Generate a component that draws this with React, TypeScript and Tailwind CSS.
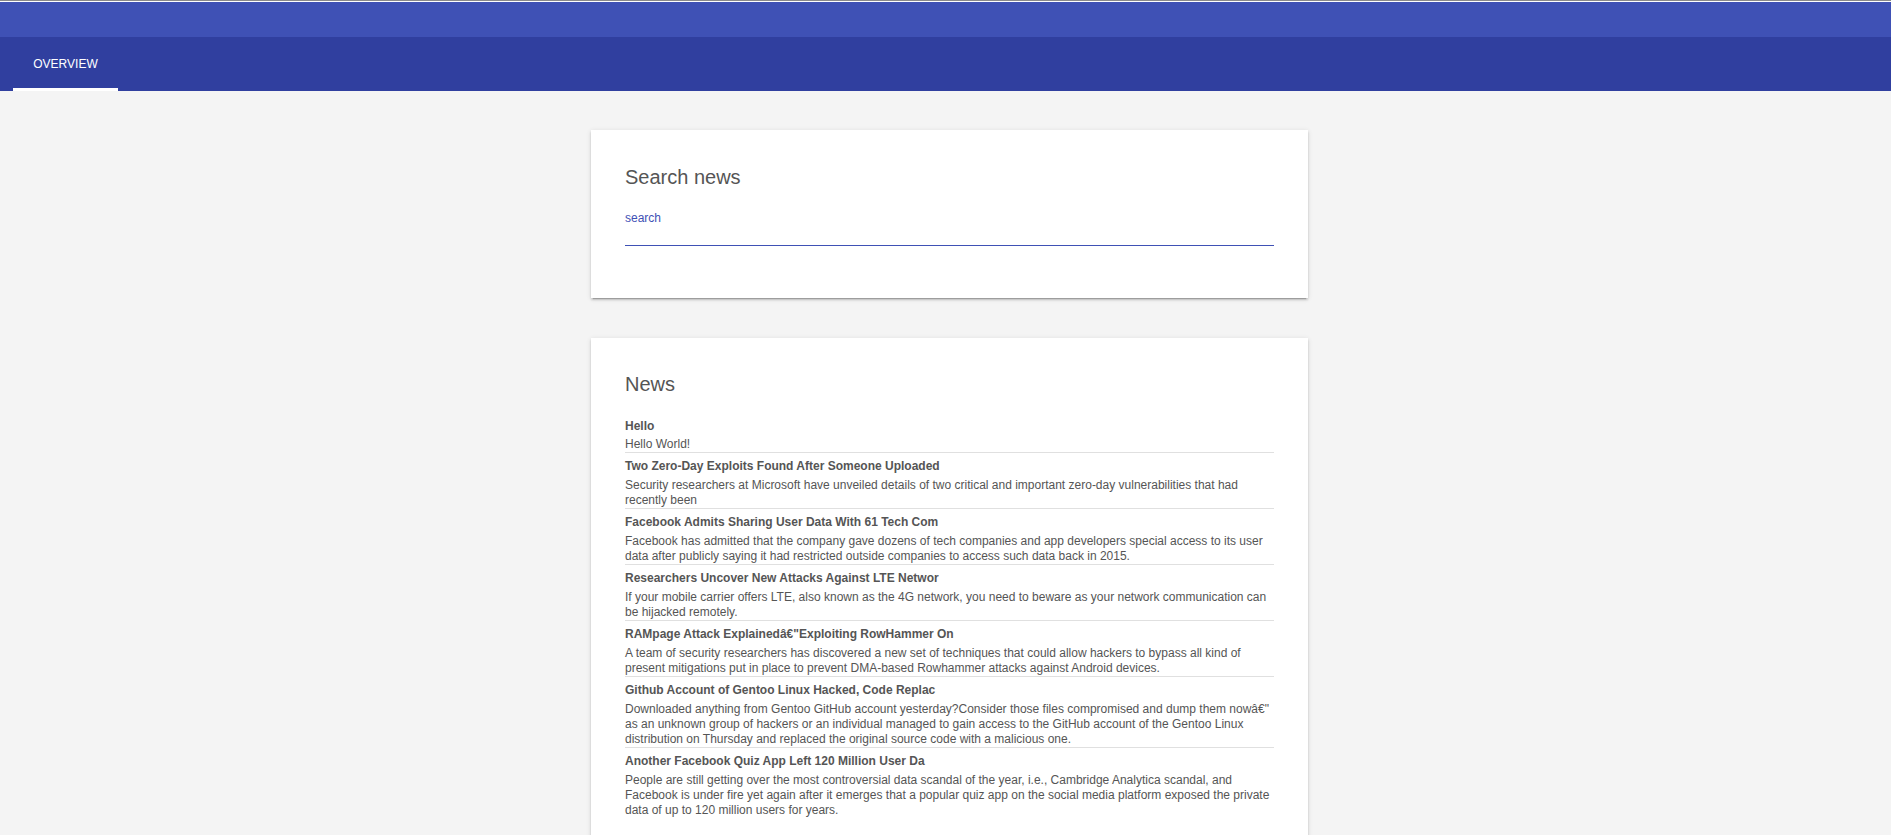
import React from 'react';

const news = [
  { title: 'Hello', body: 'Hello World!' },
  {
    title: 'Two Zero-Day Exploits Found After Someone Uploaded',
    body: 'Security researchers at Microsoft have unveiled details of two critical and important zero-day vulnerabilities that had recently been',
  },
  {
    title: 'Facebook Admits Sharing User Data With 61 Tech Com',
    body: 'Facebook has admitted that the company gave dozens of tech companies and app developers special access to its user data after publicly saying it had restricted outside companies to access such data back in 2015.',
  },
  {
    title: 'Researchers Uncover New Attacks Against LTE Networ',
    body: 'If your mobile carrier offers LTE, also known as the 4G network, you need to beware as your network communication can be hijacked remotely.',
  },
  {
    title: 'RAMpage Attack Explainedâ€"Exploiting RowHammer On',
    body: 'A team of security researchers has discovered a new set of techniques that could allow hackers to bypass all kind of present mitigations put in place to prevent DMA-based Rowhammer attacks against Android devices.',
  },
  {
    title: 'Github Account of Gentoo Linux Hacked, Code Replac',
    body: 'Downloaded anything from Gentoo GitHub account yesterday?Consider those files compromised and dump them nowâ€" as an unknown group of hackers or an individual managed to gain access to the GitHub account of the Gentoo Linux distribution on Thursday and replaced the original source code with a malicious one.',
  },
  {
    title: 'Another Facebook Quiz App Left 120 Million User Da',
    body: 'People are still getting over the most controversial data scandal of the year, i.e., Cambridge Analytica scandal, and Facebook is under fire yet again after it emerges that a popular quiz app on the social media platform exposed the private data of up to 120 million users for years.',
  },
];

const cardShadow =
  'shadow-[0_2px_2px_0_rgba(0,0,0,0.14),0_3px_1px_-2px_rgba(0,0,0,0.2),0_1px_5px_0_rgba(0,0,0,0.12)]';

const App = () => {
  return (
    <div className="min-h-screen bg-[#f4f4f4] font-['Liberation_Sans',Arial,sans-serif] text-[#555]">
      {/* header */}
      <div className="h-px bg-[#8a8a8a]" />
      <div className="h-px bg-white" />
      <div className="h-[35px] bg-[#3f51b5]" />
      <div className="flex h-[54px] bg-[#303f9f] pl-[13px]">
        <div className="flex w-[105px] flex-col">
          <div className="flex flex-1 items-center justify-center pt-[2px] text-[12px] uppercase text-white">
            Overview
          </div>
          <div className="h-[3px] bg-white" />
        </div>
      </div>

      <div className="pl-2">
        <div className="mx-auto w-[717px] pt-[39px]">
          {/* search card */}
          <div className={`bg-white px-[34px] pt-[36px] pb-[52px] ${cardShadow}`}>
            <h2 className="text-[20px] leading-[23px]">Search news</h2>
            <div className="mt-[22px] text-[12px] leading-[14px] text-[#3f51b5]">search</div>
            <div className="h-[20px]" />
            <div className="h-px bg-[#3f51b5]" />
          </div>

          {/* news card */}
          <div className={`mt-[40px] bg-white px-[34px] pt-[35px] pb-[60px] ${cardShadow}`}>
            <h2 className="text-[20px] leading-[23px]">News</h2>
            <div className="mt-[17px]">
              {news.map((n, i) => (
                <div
                  key={i}
                  className={`pt-[6px] ${i < news.length - 1 ? 'border-b border-[#e0e0e0]' : ''}`}
                >
                  <div className="text-[12px] font-bold leading-[14px]">{n.title}</div>
                  <div className={`${i === 0 ? 'mt-[4px]' : 'mt-[5px]'} text-[12px] leading-[15px]`}>
                    {n.body}
                  </div>
                </div>
              ))}
            </div>
          </div>
        </div>
      </div>
    </div>
  );
};

export default App;
